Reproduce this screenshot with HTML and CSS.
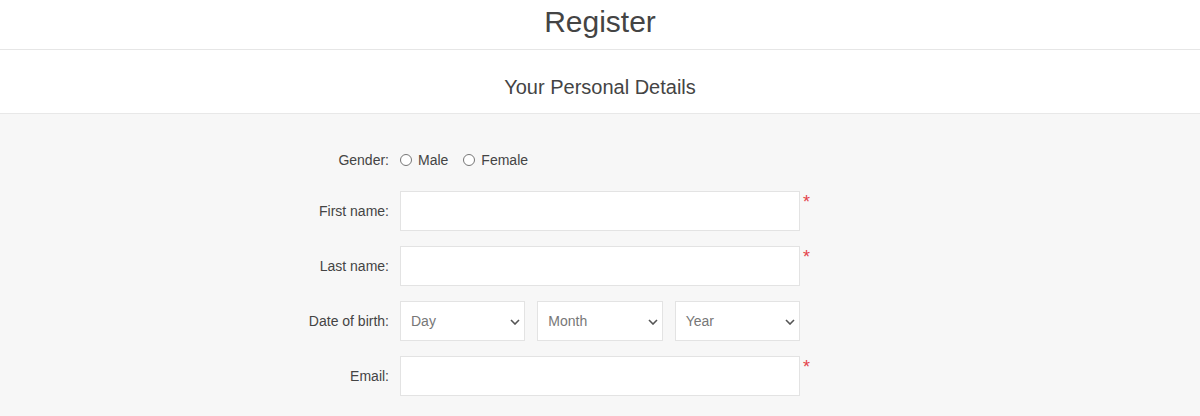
FILE: index.html
```html
<!DOCTYPE html>
<html lang="en">
<head>
<meta charset="utf-8">
<title>Register</title>
<link rel="stylesheet" href="styles.css">
</head>
<body>
<header class="page-head">
  <h1 class="page-title">Register</h1>
</header>
<section class="section">
  <div class="section-head">
    <h2 class="section-title">Your Personal Details</h2>
  </div>
  <div class="section-body">
    <form class="form">
      <div class="row row-gender">
        <span class="label">Gender:</span>
        <div class="field radios">
          <label class="radio"><span class="radio-dot"></span>Male</label>
          <label class="radio"><span class="radio-dot"></span>Female</label>
        </div>
        <span></span>
      </div>
      <div class="row">
        <label class="label">First name:</label>
        <div class="field"><input class="input" type="text"></div>
        <span class="req">*</span>
      </div>
      <div class="row">
        <label class="label">Last name:</label>
        <div class="field"><input class="input" type="text"></div>
        <span class="req">*</span>
      </div>
      <div class="row">
        <label class="label">Date of birth:</label>
        <div class="field dob">
          <div class="select"><span class="select-text">Day</span><svg class="chev" width="10" height="6" viewBox="0 0 10 6"><path d="M1 1l4 4 4-4" fill="none" stroke="#555" stroke-width="1.6"/></svg></div>
          <div class="select"><span class="select-text">Month</span><svg class="chev" width="10" height="6" viewBox="0 0 10 6"><path d="M1 1l4 4 4-4" fill="none" stroke="#555" stroke-width="1.6"/></svg></div>
          <div class="select"><span class="select-text">Year</span><svg class="chev" width="10" height="6" viewBox="0 0 10 6"><path d="M1 1l4 4 4-4" fill="none" stroke="#555" stroke-width="1.6"/></svg></div>
        </div>
        <span></span>
      </div>
      <div class="row">
        <label class="label">Email:</label>
        <div class="field"><input class="input" type="text"></div>
        <span class="req">*</span>
      </div>
    </form>
  </div>
</section>
</body>
</html>
```
FILE: styles.css
```css
* { box-sizing: border-box; }
html, body { margin: 0; padding: 0; }
body {
  font-family: "Liberation Sans", Arial, sans-serif;
  color: #444;
  background: #f7f7f7;
  height: 416px;
  overflow: hidden;
}
.page-head {
  background: #fff;
  height: 50px;
  border-bottom: 1px solid #e6e6e6;
  display: flex;
  justify-content: center;
  align-items: center;
}
.page-title {
  margin: 0;
  font-size: 30px;
  font-weight: normal;
  color: #444;
  line-height: 1;
  padding-bottom: 6px;
}
.section-head {
  background: #fff;
  height: 64px;
  border-bottom: 1px solid #e8e8e8;
  display: flex;
  justify-content: center;
  align-items: center;
}
.section-title {
  margin: 0;
  font-size: 20px;
  font-weight: normal;
  color: #444;
  line-height: 1;
  padding-top: 10px;
}
.section-body {
  background: #f7f7f7;
  padding-top: 35px;
}
.form {
  display: flex;
  flex-direction: column;
  gap: 15px;
}
.row {
  display: grid;
  grid-template-columns: 1fr 400px 1fr;
  align-items: center;
  height: 40px;
}
.row-gender {
  height: 22px;
  margin-bottom: 5px;
}
.label {
  text-align: right;
  padding-right: 11px;
  font-size: 14px;
  color: #444;
}
.field { display: flex; }
.radios { gap: 15px; align-items: center; }
.radio {
  display: flex;
  align-items: center;
  font-size: 14px;
  color: #444;
}
.radio-dot {
  width: 12px;
  height: 12px;
  border: 1px solid #767676;
  border-radius: 50%;
  background: #fff;
  margin-right: 6px;
}
.input {
  width: 400px;
  height: 40px;
  border: 1px solid #e3e3e3;
  background: #fff;
  margin: 0;
  padding: 0 10px;
  font: inherit;
}
.req {
  align-self: start;
  color: #e4434b;
  font-size: 18px;
  padding-left: 3px;
  line-height: 1;
  margin-top: 2px;
}
.dob { gap: 12px; }
.select {
  position: relative;
  flex: 1;
  height: 40px;
  border: 1px solid #e3e3e3;
  background: #fff;
  display: flex;
  align-items: center;
  padding-left: 10px;
}
.select-text {
  font-size: 14px;
  color: #777;
}
.chev {
  position: absolute;
  right: 4px;
  top: 17px;
}
```
